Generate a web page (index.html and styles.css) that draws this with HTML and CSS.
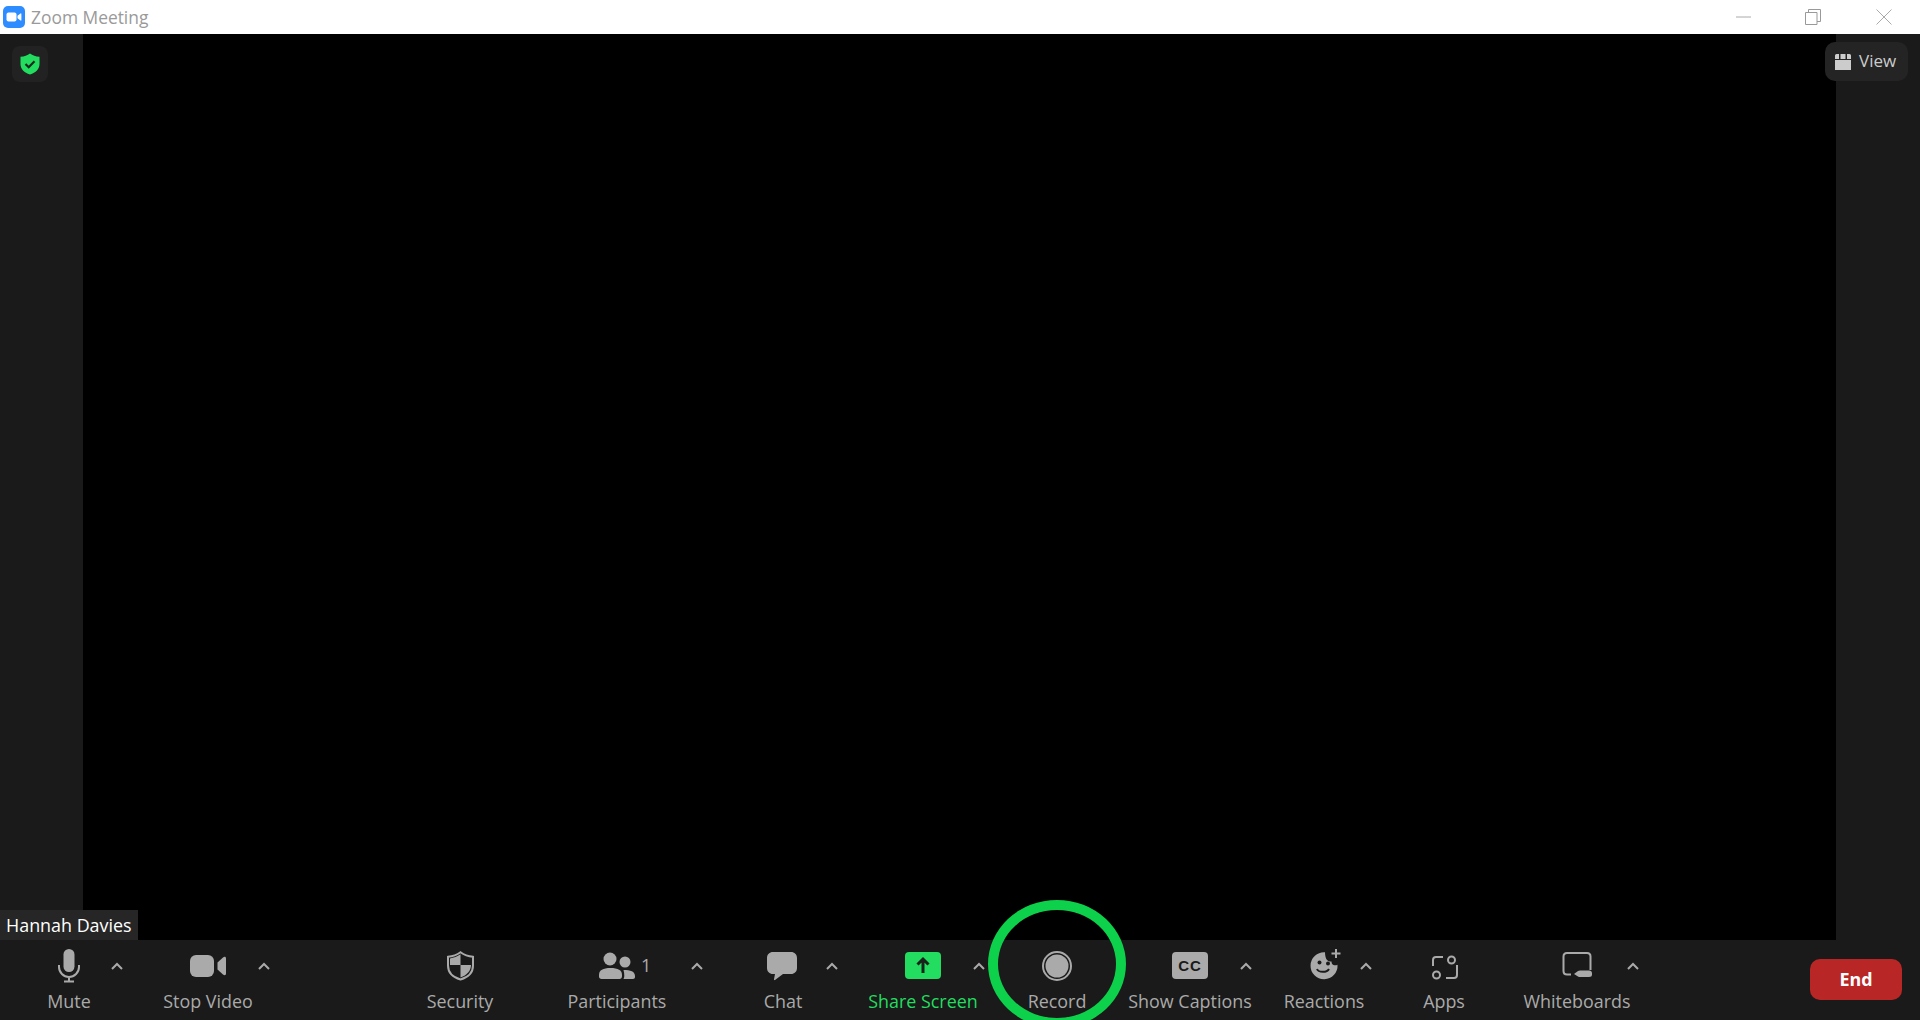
FILE: index.html
```html
<!DOCTYPE html>
<html lang="en">
<head>
<meta charset="utf-8">
<title>Zoom Meeting</title>
<link rel="stylesheet" href="styles.css">
</head>
<body>
<div class="app">
  <header class="titlebar">
    <div class="title-left">
      <svg class="app-logo" viewBox="0 0 22 22"><rect width="22" height="22" rx="5" fill="#2d8cff"/><rect x="3.5" y="6.5" width="10" height="9" rx="2" fill="#fff"/><path d="M14.5 9.8l3-2.3c.5-.3.9-.1.9.4v6.2c0 .5-.4.7-.9.4l-3-2.3z" fill="#fff"/></svg>
      <span class="title-text">Zoom Meeting</span>
    </div>
    <div class="win-controls">
      <svg class="win-btn" viewBox="0 0 16 16"><path d="M0 8h15" stroke="#aaa" fill="none"/></svg>
      <svg class="win-btn" viewBox="0 0 16 16"><path d="M.5 3.5h11.5v12H.5zM3.5 3.5V.5h12v12H12" stroke="#999" fill="none"/></svg>
      <svg class="win-btn win-close" viewBox="0 0 16 16"><path d="M.5.5l15 15M15.500.5l-15 15" stroke="#aaa" fill="none"/></svg>
    </div>
  </header>

  <main class="stage">
    <aside class="side"></aside>
    <section class="video"></section>
    <aside class="side"></aside>
    <div class="shield-badge">
      <svg viewBox="0 0 22 22" width="22" height="22"><path d="M11 .5c2.600 2 5.500 3 9.500 3.300V11c0 5-3.600 8.600-9.500 10.500C5.100 19.600 1.500 16 1.500 11V3.800C5.500 3.500 8.400 2.500 11 .5z" fill="#22dd5f"/><path d="M6.500 11l3.200 3.200 5.800-6" fill="none" stroke="#1a2a1f" stroke-width="2.200"/></svg>
    </div>
    <div class="view-btn">
      <svg viewBox="0 0 16 16" width="16" height="16"><path d="M0 5V1.500Q0 0 1.500 0H4v5zM5.500 0h5v5h-5zM12 0h2.500Q16 0 16 1.500V5h-4zM0 6h16v10H0z" fill="#ccc"/></svg>
      <span class="view-text">View</span>
    </div>
    <div class="name-tag">Hannah Davies</div>
  </main>

  <footer class="toolbar">
    <div class="tool t-mute">
      <svg class="icon" viewBox="0 0 36 36"><rect x="12.500" y="1" width="11" height="23" rx="5.500" fill="#aaa"/><path d="M8 17v2a10 10 0 0 0 20 0v-2M18 29v4.500M13 33.500h10" fill="none" stroke="#aaa" stroke-width="2"/></svg>
      <span class="label">Mute</span>
    </div>
    <svg class="caret" viewBox="0 0 16 36"><path d="M3 21l5-5 5 5" /></svg>

    <div class="tool t-video">
      <svg class="icon" viewBox="0 0 36 36"><rect x="0" y="7" width="24" height="22" rx="6" fill="#aaa"/><path d="M27.500 14.500l5.500-5c1.500-1.200 3-.8 3 1V25.500c0 1.800-1.500 2.200-3 1l-5.500-5z" fill="#aaa"/></svg>
      <span class="label">Stop Video</span>
    </div>
    <svg class="caret" viewBox="0 0 16 36"><path d="M3 21l5-5 5 5" /></svg>

    <div class="tool t-security">
      <svg class="icon" viewBox="0 0 36 36"><path d="M18.500 4.200c-3.600 2.600-7.800 4.100-12.500 4.600v8.700c0 6.700 4.800 11.800 12.500 14 7.700-2.200 12.500-7.300 12.500-14V8.800c-4.700-.5-8.900-2-12.500-4.600z" fill="none" stroke="#aaa" stroke-width="2"/><path d="M18.500 6.200c-3.200 2.200-6.700 3.500-10.500 4.200V17h10.500zM18.500 17H29c0 5.800-4 10.300-10.500 12.400z" fill="#aaa"/></svg>
      <span class="label">Security</span>
    </div>

    <div class="tool t-participants">
      <div class="icon-wrap">
        <svg class="icon" viewBox="0 0 36 36"><circle cx="11" cy="11" r="6.500" fill="#aaa"/><circle cx="26" cy="14" r="5.500" fill="#aaa"/><path d="M0 27c0-5 4-7 11.500-7S23 22 23 27v1c0 2-1 3-2.500 3H2.500C1 31 0 30 0 28.500z" fill="#aaa"/><path d="M24.500 22c7 0 11.500 1.500 11.500 6v1c0 1.300-.8 2-2 2H24.500c.5-1 .8-2 .8-3 0-2-.2-4-.8-6z" fill="#aaa"/></svg>
        <span class="count">1</span>
      </div>
      <span class="label">Participants</span>
    </div>
    <svg class="caret" viewBox="0 0 16 36"><path d="M3 21l5-5 5 5" /></svg>

    <div class="tool t-chat">
      <svg class="icon" viewBox="0 0 36 36"><path d="M8 4h18c3.500 0 6 2.500 6 6v10c0 3.500-2.500 6-6 6h-8l-8 6c-.7.4-1.200 0-1-.7L10 26H8c-3.500 0-6-2.500-6-6V10c0-3.500 2.500-6 6-6z" fill="#aaa"/></svg>
      <span class="label">Chat</span>
    </div>
    <svg class="caret" viewBox="0 0 16 36"><path d="M3 21l5-5 5 5" /></svg>

    <div class="tool t-share">
      <svg class="icon" viewBox="0 0 36 36"><rect x="0" y="4" width="36" height="27" rx="4" fill="#22dd5f"/><path d="M18 25V11M12.500 16.500L18 11l5.500 5.500" fill="none" stroke="#17231b" stroke-width="3"/></svg>
      <span class="label label-green">Share Screen</span>
    </div>
    <svg class="caret" viewBox="0 0 16 36"><path d="M3 21l5-5 5 5" /></svg>

    <div class="tool t-record">
      <svg class="icon" viewBox="0 0 36 36"><circle cx="18" cy="18" r="14" fill="none" stroke="#aaa" stroke-width="2"/><circle cx="18" cy="18" r="11.500" fill="#aaa"/></svg>
      <span class="label">Record</span>
    </div>

    <div class="tool t-captions">
      <span class="cc-icon">CC</span>
      <span class="label">Show Captions</span>
    </div>
    <svg class="caret" viewBox="0 0 16 36"><path d="M3 21l5-5 5 5" /></svg>

    <div class="tool t-reactions">
      <svg class="icon" viewBox="0 0 36 36"><path d="M19 4.300a13.500 13.500 0 1 0 12.500 12.500c-1.500.7-3 .7-4 .2-1.300-.5-2-1.700-2-3.500-2 0-3.700-.5-4.700-1.800C19.800 10.500 19 7.500 19 4.300z" fill="#aaa"/><circle cx="13.500" cy="14.500" r="2" fill="#1a1a1a"/><circle cx="22" cy="15.500" r="2" fill="#1a1a1a"/><path d="M11 21c1.500 3.800 10 3.800 12 0" fill="none" stroke="#1a1a1a" stroke-width="2"/><path d="M30 1v9M25.500 5.500h9" stroke="#aaa" stroke-width="2" fill="none"/></svg>
      <span class="label">Reactions</span>
    </div>
    <svg class="caret" viewBox="0 0 16 36"><path d="M3 21l5-5 5 5" /></svg>

    <div class="tool t-apps">
      <svg class="icon" viewBox="0 0 36 36"><path d="M17 9h-7c-2 0-3 1-3 3v6M31 17v10c0 2-1 3-3 3h-8" fill="none" stroke="#aaa" stroke-width="2"/><circle cx="25.500" cy="12" r="3.500" fill="none" stroke="#aaa" stroke-width="2"/><circle cx="10.500" cy="27" r="3.500" fill="none" stroke="#aaa" stroke-width="2"/></svg>
      <span class="label">Apps</span>
    </div>

    <div class="tool t-whiteboards">
      <svg class="icon" viewBox="0 0 36 36"><path d="M12 26.500H8c-2.300 0-3.500-1.200-3.500-3.500V8.500C4.500 6.200 5.700 5 8 5h20c2.300 0 3.500 1.200 3.500 3.500V22" fill="none" stroke="#aaa" stroke-width="2"/><path d="M15 26l4-3q1-.5 2-.5h9q3 0 3 3v1q0 2.500-3 2.500h-9q-1 0-2-.5z" fill="#aaa"/></svg>
      <span class="label">Whiteboards</span>
    </div>
    <svg class="caret" viewBox="0 0 16 36"><path d="M3 21l5-5 5 5" /></svg>

    <button class="end-btn">End</button>
  </footer>
  <div class="annotation-ring"></div>
</div>
</body>
</html>
```
FILE: styles.css
```css
* { box-sizing: border-box; }
html, body { margin: 0; height: 100%; overflow: hidden; }
body { font-family: "Open Sans", "Noto Sans", sans-serif; background: #1a1a1a; }
.app { position: relative; display: flex; flex-direction: column; height: 1020px; overflow: hidden; }

.titlebar { height: 34px; background: #fff; display: flex; align-items: center; justify-content: space-between; padding: 0 28px 0 3px; flex: none; }
.title-left { display: flex; align-items: center; gap: 6px; }
.app-logo { width: 22px; height: 22px; display: block; }
.title-text { font-size: 17.400px; color: #9a9a9a; line-height: 22px; margin-top: -1px; }
.win-controls { display: flex; gap: 53px; margin-top: -1px; }
.win-btn { width: 16px; height: 16px; display: block; }
.win-close { margin-left: 2px; }

.stage { position: relative; flex: 1; display: flex; min-height: 0; }
.side { width: 83px; background: #1a1a1a; flex: none; }
.side:last-of-type { width: 84px; }
.video { flex: 1; background: #000; }
.shield-badge { position: absolute; left: 12px; top: 12px; width: 36px; height: 36px; border-radius: 8px; background: #222; display: flex; align-items: center; justify-content: center; }
.view-btn { position: absolute; left: 1825px; top: 8px; width: 83px; height: 39px; border-radius: 10px; background: #242424; display: flex; align-items: center; padding-left: 10px; gap: 8px; color: #ccc; font-size: 17px; }
.view-text { margin-top: -2px; }
.name-tag { position: absolute; left: 0; bottom: 0; width: 138px; height: 30px; background: #262626; color: #fff; font-size: 17.900px; line-height: 30px; padding-left: 6px; white-space: nowrap; }

.toolbar { height: 80px; flex: none; background: #1a1a1a; display: flex; align-items: flex-start; padding: 8px 18px 0 29px; }
.tool { display: flex; flex-direction: column; align-items: center; flex: none; gap: 7px; }
.icon { width: 36px; height: 36px; display: block; }
.label { font-size: 17.900px; line-height: 20px; color: #aaa; white-space: nowrap; }
.label-green { color: #22dd5f; }
.caret { width: 16px; height: 36px; flex: none; display: block; }
.caret path { fill: none; stroke: #aaa; stroke-width: 2; }
.icon-wrap { position: relative; }
.count { position: absolute; left: 42px; top: 7px; font-size: 17.900px; line-height: 20px; color: #aaa; }
.cc-icon { width: 36px; height: 27px; margin: 4px 0 5px; background: #aaa; border-radius: 4px; color: #1a1a1a; font-family: "Liberation Sans", sans-serif; font-weight: 700; font-size: 15px; line-height: 27px; text-align: center; letter-spacing: 1px; }

.t-mute { width: 80px; }
.t-video { width: 96px; margin-left: 35px; }
.t-security { width: 100px; margin-left: 138px; }
.t-participants { width: 144px; margin-left: 35px; }
.t-chat { width: 82px; margin-left: 37px; }
.t-share { width: 96px; margin-left: 35px; }
.t-record { width: 100px; margin-left: 20px; }
.t-captions { width: 96px; margin-left: 35px; }
.t-reactions { width: 68px; margin-left: 36px; }
.t-apps { width: 80px; margin-left: 30px; }
.t-whiteboards { width: 96px; margin-left: 45px; }

.end-btn { margin: 11px 0 0 auto; width: 92px; height: 41px; border: 0; border-radius: 10px; background: #b92626; color: #fff; font-family: inherit; font-size: 17.900px; font-weight: 700; padding: 0 0 2px; }

.annotation-ring { position: absolute; left: 988px; top: 900px; width: 138px; height: 128px; border: 10px solid #0dd04b; border-radius: 50%; pointer-events: none; }
```
